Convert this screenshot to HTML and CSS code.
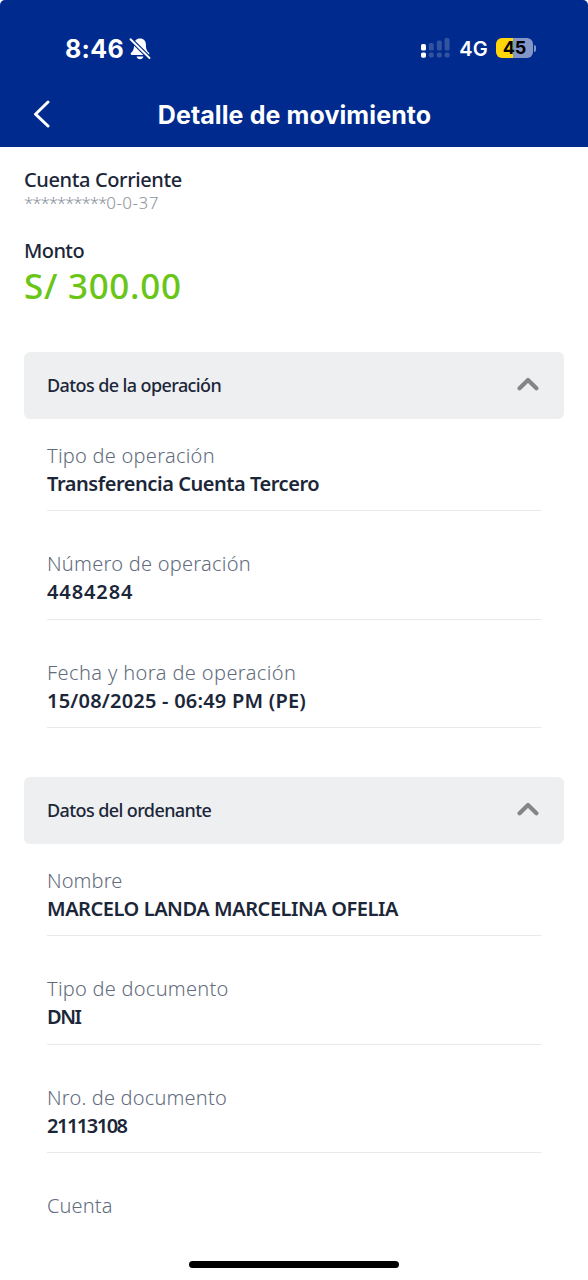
FILE: index.html
```html
<!DOCTYPE html>
<html lang="es">
<head>
<meta charset="utf-8">
<title>Detalle de movimiento</title>
<link rel="stylesheet" href="styles.css">
</head>
<body>
<div class="screen">
  <header class="header">
    <div class="status">
      <div class="status-left">
        <span class="time">8:46</span>
        <svg class="bell" viewBox="0 0 22 24" width="22" height="24">
          <path d="M11 1.500c-3.700 0-5.900 2.500-5.900 6 0 5-1.200 6.600-3 8.300-.9.9-.4 2.200.8 2.200h16.200c1.200 0 1.700-1.300.8-2.200-1.800-1.700-3-3.300-3-8.300 0-3.500-2.200-6-5.900-6z" fill="#fff"/>
          <path d="M7.600 19.600h6.800c-.4 1.700-1.700 2.700-3.400 2.700s-3-1-3.400-2.700z" fill="#fff"/>
          <path d="M.8 1.500 21 21.500" stroke="#002a8d" stroke-width="4.200"/>
          <path d="M1.500 2.200 20.500 21" stroke="#fff" stroke-width="1.900" stroke-linecap="round"/>
        </svg>
      </div>
      <div class="status-right">
        <svg class="signal" viewBox="0 0 29 20" width="29" height="20">
          <g fill="#fff"><rect x="0" y="6" width="5" height="6.500" rx="1.600"/><rect x="0" y="14.500" width="5" height="5.200" rx="1.600"/></g>
          <g fill="#33529f"><rect x="7.800" y="5" width="5" height="7.500" rx="1.600"/><rect x="15.800" y="2.500" width="5" height="10" rx="1.600"/><rect x="23.600" y="0" width="5" height="12.500" rx="1.600"/><rect x="7.800" y="14.500" width="5" height="5" rx="1.800"/><rect x="15.800" y="14.500" width="5" height="5" rx="1.800"/><rect x="23.600" y="14.500" width="5" height="5" rx="1.800"/></g>
        </svg>
        <span class="network">4G</span>
        <span class="battery">45</span><span class="battery-tip"></span>
      </div>
    </div>
    <div class="navbar">
      <svg class="back" viewBox="0 0 18 28" width="18" height="28"><path d="M15 2 2.500 14.200 15 26" fill="none" stroke="#fff" stroke-width="3" stroke-linecap="round" stroke-linejoin="round"/></svg>
      <h1 class="title">Detalle de movimiento</h1>
    </div>
  </header>
  <main class="content">
    <section class="summary">
      <div class="account">Cuenta Corriente</div>
      <div class="mask"><span class="stars">**********</span>0-0-37</div>
      <div class="amount-label">Monto</div>
      <div class="amount">S/ 300.00</div>
    </section>
    <section class="group">
      <div class="group-head"><h2 class="group-title">Datos de la operación</h2>
        <svg class="chevron" viewBox="0 0 22 14" width="22" height="14"><path d="M2.600 11.200 11 3l8.400 8.200" fill="none" stroke="#858585" stroke-width="4.200" stroke-linecap="round" stroke-linejoin="round"/></svg></div>
      <div class="item"><div class="label">Tipo de operación</div><div class="value">Transferencia Cuenta Tercero</div></div>
      <div class="item"><div class="label">Número de operación</div><div class="value v-number">4484284</div></div>
      <div class="item"><div class="label l-date">Fecha y hora de operación</div><div class="value v-date">15/08/2025 - 06:49 PM (PE)</div></div>
    </section>
    <section class="group">
      <div class="group-head"><h2 class="group-title">Datos del ordenante</h2>
        <svg class="chevron" viewBox="0 0 22 14" width="22" height="14"><path d="M2.600 11.200 11 3l8.400 8.200" fill="none" stroke="#858585" stroke-width="4.200" stroke-linecap="round" stroke-linejoin="round"/></svg></div>
      <div class="item"><div class="label l-short">Nombre</div><div class="value">MARCELO LANDA MARCELINA OFELIA</div></div>
      <div class="item"><div class="label">Tipo de documento</div><div class="value v-doctype">DNI</div></div>
      <div class="item"><div class="label l-docnum">Nro. de documento</div><div class="value v-docnum">21113108</div></div>
      <div class="item item-last"><div class="label l-short">Cuenta</div></div>
    </section>
  </main>
  <div class="home-indicator"></div>
</div>
</body>
</html>
```
FILE: styles.css
```css
* { box-sizing: border-box; }
body { margin: 0; background: #fff; }
.screen {
  width: 588px; height: 1280px; overflow: hidden;
  display: flex; flex-direction: column;
  color: #1c2639; font-family: "Noto Sans", sans-serif; white-space: nowrap;
}
.header {
  flex: none; height: 147px; background: #002a8d; color: #fff;
  border-radius: 5px 5px 0 0; font-family: Inter, sans-serif;
}
.status { height: 80px; padding: 16px 52px 0 65px; display: flex; justify-content: space-between; align-items: center; }
.status-left, .status-right { display: flex; align-items: center; }
.time { margin-top: 1px; font-size: 25px; font-weight: 700; line-height: 30px; letter-spacing: .3px; }
.bell { margin: 1px 0 0 5px; }
.network { margin: 1px 0 0 9px; font-size: 20px; font-weight: 600; line-height: 26px; letter-spacing: .2px; }
.battery {
  width: 37px; height: 20px; margin-left: 8px; border-radius: 6px;
  background: linear-gradient(90deg, #ffd60a 46%, #8495c8 46%);
  color: #000; font-size: 18px; font-weight: 700; line-height: 20px; text-align: center;
}
.battery-tip { width: 2px; height: 7px; margin-left: 1px; border-radius: 0 2px 2px 0; background: #8495c8; }
.navbar { height: 67px; display: grid; grid-template-columns: 84px 1fr 84px; align-items: center; }
.back { margin: 1px 0 0 32.5px; }
.title { margin: 2px 0 0 1px; font-size: 25px; font-weight: 700; line-height: 32px; letter-spacing: .1px; text-align: center; }
.content { flex: 1; min-height: 0; padding: 21px 24px 0; }
.summary { height: 184px; }
.account, .amount-label { font-size: 20px; font-weight: 500; line-height: 24px; letter-spacing: -.38px; }
.mask { color: #8b919c; font-size: 17px; font-weight: 300; line-height: 22px; letter-spacing: .5px; }
.stars { letter-spacing: -1.15px; }
.amount-label { margin-top: 25px; letter-spacing: -.6px; }
.amount { margin-top: 2px; color: #69c516; font-size: 35px; font-weight: 500; line-height: 42px; letter-spacing: .7px; }
.group + .group { margin-top: 49px; }
.group-head {
  height: 67px; padding: 0 25px 0 23px; border-radius: 6px; background: #eeeff1;
  display: flex; align-items: center; justify-content: space-between;
}
.group-title { margin: -2px 0 0; font-size: 18px; font-weight: 500; line-height: 26px; letter-spacing: -.6px; }
.chevron { margin-top: -4px; }
.item { height: 92px; margin: 0 23px; padding-top: 22.6px; border-bottom: 1px solid #e9eaed; }
.item + .item { margin-top: 16.5px; }
.item-last { border-bottom: 0; height: 60px; }
.label { color: #626c7d; font-size: 20px; font-weight: 300; line-height: 28px; letter-spacing: .26px; }
.l-date { letter-spacing: .4px; }
.l-docnum { letter-spacing: .18px; }
.l-short { letter-spacing: .1px; }
.value { font-size: 20px; font-weight: 600; line-height: 28px; letter-spacing: -.45px; }
.v-number { letter-spacing: .9px; }
.v-date { letter-spacing: .22px; }
.v-doctype { letter-spacing: -1.5px; }
.v-docnum { letter-spacing: -1.5px; }
.home-indicator { flex: none; width: 210px; height: 7px; margin: 0 auto 12px; border-radius: 4px; background: #000; }
```
